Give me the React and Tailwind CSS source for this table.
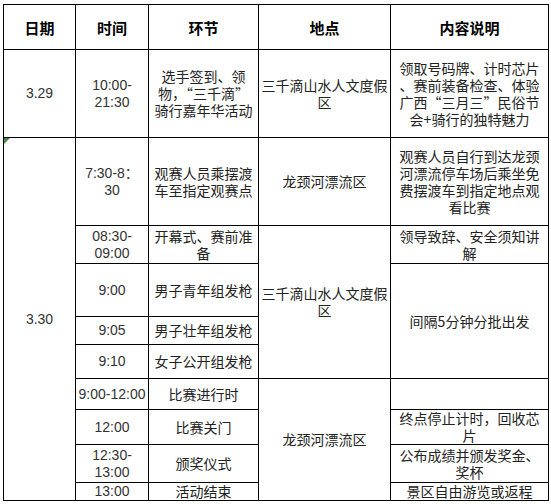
import React from "react";

const cjk = "font-['Noto_Sans_CJK_SC',sans-serif]";
const latin = "font-['Liberation_Sans','Noto_Sans_CJK_SC',sans-serif]";

// each cell: grid position, text lines, font
const cells = [
  // header
  { pos: "col-start-1 row-start-1", lines: ["日期"], head: true },
  { pos: "col-start-2 row-start-1", lines: ["时间"], head: true },
  { pos: "col-start-3 row-start-1", lines: ["环节"], head: true },
  { pos: "col-start-4 row-start-1", lines: ["地点"], head: true },
  { pos: "col-start-5 row-start-1", lines: ["内容说明"], head: true },

  // 3.29
  { pos: "col-start-1 row-start-2", lines: ["3.29"], num: true },
  { pos: "col-start-2 row-start-2", lines: ["10:00-", "21:30"], num: true },
  { pos: "col-start-3 row-start-2", lines: ["选手签到、领", "物，“三千滴”", "骑行嘉年华活动"] },
  { pos: "col-start-4 row-start-2", lines: ["三千滴山水人文度假", "区"] },
  {
    pos: "col-start-5 row-start-2",
    lines: ["领取号码牌、计时芯片", "、赛前装备检查、体验", "广西“三月三”民俗节", "会+骑行的独特魅力"],
  },

  // 3.30
  { pos: "col-start-1 row-start-3 row-span-9", lines: ["3.30"], num: true, mark: true },

  { pos: "col-start-2 row-start-3", lines: ["7:30-8：", "30"], num: true },
  { pos: "col-start-3 row-start-3", lines: ["观赛人员乘摆渡", "车至指定观赛点"] },
  { pos: "col-start-4 row-start-3", lines: ["龙颈河漂流区"] },
  {
    pos: "col-start-5 row-start-3",
    lines: ["观赛人员自行到达龙颈", "河漂流停车场后乘坐免", "费摆渡车到指定地点观", "看比赛"],
  },

  { pos: "col-start-2 row-start-4", lines: ["08:30-", "09:00"], num: true },
  { pos: "col-start-3 row-start-4", lines: ["开幕式、赛前准", "备"] },
  { pos: "col-start-4 row-start-4 row-span-4", lines: ["三千滴山水人文度假", "区"] },
  { pos: "col-start-5 row-start-4", lines: ["领导致辞、安全须知讲", "解"] },

  { pos: "col-start-2 row-start-5", lines: ["9:00"], num: true },
  { pos: "col-start-3 row-start-5", lines: ["男子青年组发枪"] },
  { pos: "col-start-5 row-start-5 row-span-3", lines: ["间隔5分钟分批出发"] },

  { pos: "col-start-2 row-start-6", lines: ["9:05"], num: true },
  { pos: "col-start-3 row-start-6", lines: ["男子壮年组发枪"] },

  { pos: "col-start-2 row-start-7", lines: ["9:10"], num: true },
  { pos: "col-start-3 row-start-7", lines: ["女子公开组发枪"] },

  { pos: "col-start-2 row-start-8", lines: ["9:00-12:00"], num: true },
  { pos: "col-start-3 row-start-8", lines: ["比赛进行时"] },
  { pos: "col-start-4 row-start-8 row-span-4", lines: ["龙颈河漂流区"] },
  { pos: "col-start-5 row-start-8", lines: [] },

  { pos: "col-start-2 row-start-9", lines: ["12:00"], num: true },
  { pos: "col-start-3 row-start-9", lines: ["比赛关门"] },
  { pos: "col-start-5 row-start-9", lines: ["终点停止计时，回收芯", "片"] },

  { pos: "col-start-2 row-start-10", lines: ["12:30-", "13:00"], num: true },
  { pos: "col-start-3 row-start-10", lines: ["颁奖仪式"] },
  { pos: "col-start-5 row-start-10", lines: ["公布成绩并颁发奖金、", "奖杯"] },

  { pos: "col-start-2 row-start-11", lines: ["13:00"], num: true },
  { pos: "col-start-3 row-start-11", lines: ["活动结束"] },
  { pos: "col-start-5 row-start-11", lines: ["景区自由游览或返程"] },
];

function Cell({ cell }) {
  const font = cell.head
    ? `${cjk} font-bold text-[15px] text-black`
    : cell.num
    ? `${latin} text-[14px] text-[#333]`
    : `${cjk} text-[14px] text-[#222]`;

  return (
    <div
      className={`${cell.pos} relative bg-white overflow-hidden flex flex-col items-center justify-center text-center leading-[17px] ${font}`}
    >
      {cell.mark && (
        <div className="absolute left-0 top-0 w-0 h-0 border-t-[6px] border-r-[6px] border-t-[#4c8a4c] border-r-transparent" />
      )}
      {cell.lines.map((line, i) => (
        <span key={i} className="whitespace-nowrap">
          {line}
        </span>
      ))}
    </div>
  );
}

export default function App() {
  return (
    <div className="min-h-screen bg-white pl-[3px] pt-[4px]">
      <div className="inline-grid grid-cols-[71px_72px_109px_131px_157px] grid-rows-[44px_87px_87px_37px_52px_27px_33px_30px_34px_37px_17px] gap-px p-px bg-black">
        {cells.map((cell, i) => (
          <Cell key={i} cell={cell} />
        ))}
      </div>
    </div>
  );
}
